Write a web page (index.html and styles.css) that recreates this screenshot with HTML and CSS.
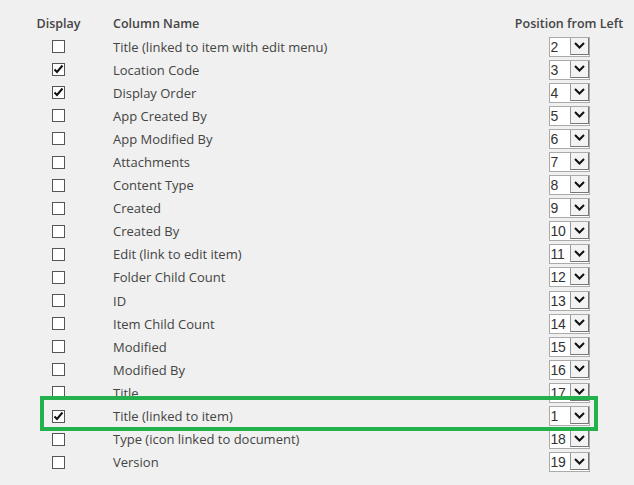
FILE: index.html
```html
<!DOCTYPE html>
<html>
<head>
<meta charset="utf-8">
<link rel="stylesheet" href="styles.css">
</head>
<body>
<div class="wrap">
  <div class="grid">
    <div class="h c1">Display</div><div class="h c2">Column Name</div><div class="h c3">Position from Left</div>
  </div>
  <div class="rows" id="rows"></div>
  <div class="highlight"></div>
</div>
<script src="app.js"></script>
</body>
</html>
```
FILE: styles.css
```css
html, body { margin: 0; padding: 0; }
body { background: #f0f0f0; width: 634px; height: 485px; overflow: hidden; font-family: "Open Sans", sans-serif; font-size: 13px; color: #444; }
.wrap { position: relative; padding: 12px 10px 0 30px; }
.grid { display: grid; grid-template-columns: 57px 1fr 110px; height: 23px; align-items: center; }
.row { height: 23.1px; }
.h { font-weight: 600; color: #444; font-size: 12.5px; }
.c1 { text-align: center; display: flex; justify-content: center; }
.c2 { padding-left: 26px; white-space: nowrap; }
.c3 { display: flex; justify-content: center; }
.h.c3 { white-space: nowrap; }
.cb { width: 11px; height: 11px; border: 1px solid #555; background: #fff; display: flex; align-items: center; justify-content: center; }
.sel { display: flex; height: 18px; border: 1px solid #aaa; background: #fff; }
.num { width: 18px; font-family: "Liberation Sans", sans-serif; font-size: 14px; color: #333; line-height: 18px; padding-left: 1px; letter-spacing: -0.3px; }
.btn { width: 17px; height: 16px; border-left: 1px solid #999; border-right: 1px solid #777; border-bottom: 1px solid #777; background: #f3f3f3; display: flex; align-items: center; justify-content: center; margin-left: 1px; }
.highlight { position: absolute; left: 40px; top: 396px; width: 550px; height: 27px; border: 4px solid #22b14c; }
```
FILE: app.js
```js
const data = [
  ["Title (linked to item with edit menu)",0,2],
  ["Location Code",1,3],
  ["Display Order",1,4],
  ["App Created By",0,5],
  ["App Modified By",0,6],
  ["Attachments",0,7],
  ["Content Type",0,8],
  ["Created",0,9],
  ["Created By",0,10],
  ["Edit (link to edit item)",0,11],
  ["Folder Child Count",0,12],
  ["ID",0,13],
  ["Item Child Count",0,14],
  ["Modified",0,15],
  ["Modified By",0,16],
  ["Title",0,17],
  ["Title (linked to item)",1,1],
  ["Type (icon linked to document)",0,18],
  ["Version",0,19]
];
const check = '<svg width="11" height="11" viewBox="0 0 11 11"><path d="M1.5 5.5 L4 8 L9.5 1.5" fill="none" stroke="#111" stroke-width="2"/></svg>';
const chev = '<svg width="11" height="7" viewBox="0 0 11 7"><path d="M1 1 L5.5 5.5 L10 1" fill="none" stroke="#111" stroke-width="2"/></svg>';
const rows = document.getElementById('rows');
rows.innerHTML = data.map(d => `<div class="grid row"><div class="c1"><span class="cb">${d[1]?check:''}</span></div><div class="c2">${d[0]}</div><div class="c3"><span class="sel"><span class="num">${d[2]}</span><span class="btn">${chev}</span></span></div></div>`).join('');
```
